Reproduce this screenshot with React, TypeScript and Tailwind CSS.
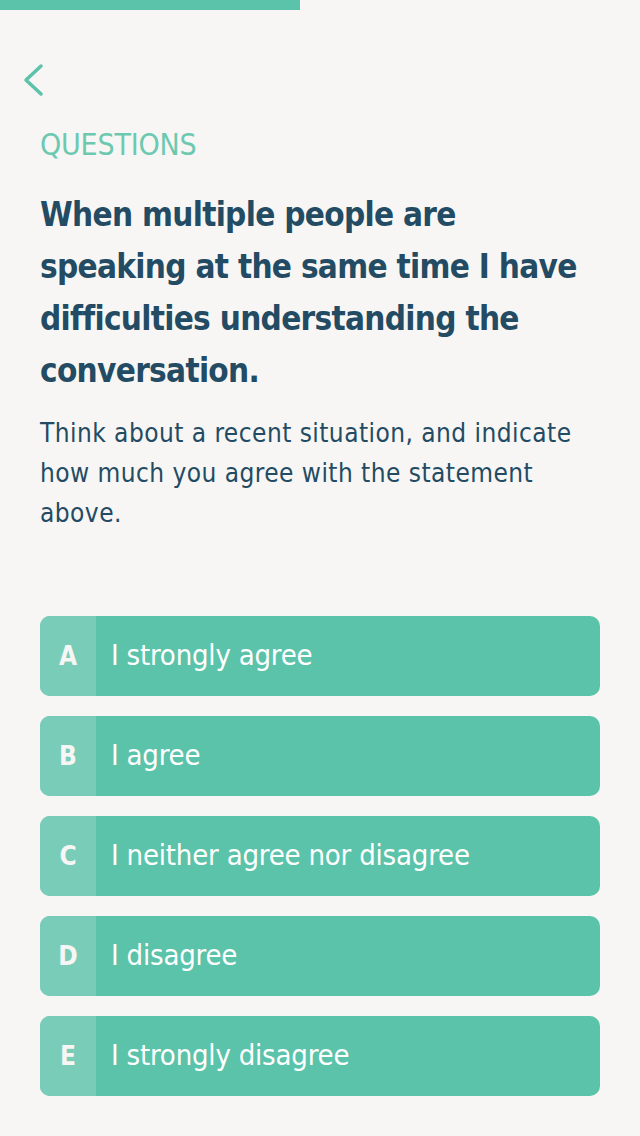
const options = [
  { key: "A", label: "I strongly agree" },
  { key: "B", label: "I agree" },
  { key: "C", label: "I neither agree nor disagree" },
  { key: "D", label: "I disagree" },
  { key: "E", label: "I strongly disagree" },
];

const font = { fontFamily: "'Liberation Sans Narrow', 'DejaVu Sans Condensed', sans-serif" };

export default function App() {
  return (
    <div className="min-h-screen w-full bg-[#f7f6f4]" style={font}>
      {/* progress */}
      <div className="h-[10px] w-[300px] bg-[#5bc3a9]" />

      <div className="pt-[50px] pl-[20px]">
        <button className="block h-10 w-7 text-[#5bc3a9]">
          <svg width="28" height="40" viewBox="0 0 28 40" fill="none">
            <path d="M21 6 L6 20 L21 34" stroke="currentColor" strokeWidth="3.5" strokeLinecap="round" strokeLinejoin="round" />
          </svg>
        </button>
      </div>

      <div className="px-10">
        <p className="mt-[27px] text-[30px] leading-9 tracking-[-0.2px] text-[#6cc9b0]">QUESTIONS</p>

        <h1 className="mt-[26px] text-[33px] font-bold leading-[52px] tracking-[-0.7px] text-[#234b63]">
          When multiple people are speaking at the same time I have difficulties understanding the conversation.
        </h1>

        <p className="mt-4 text-[26px] leading-10 tracking-[0.45px] text-[#234b63]">
          Think about a recent situation, and indicate how much you agree with the statement above.
        </p>

        <div className="mt-[83px] flex flex-col gap-5">
          {options.map((o) => (
            <div key={o.key} className="flex h-20 overflow-hidden rounded-[10px] bg-[#5bc3a9]">
              <div className="flex w-14 items-center justify-center bg-[#79cdb8] text-[26px] font-bold text-[#f7f6f4]">
                {o.key}
              </div>
              <div className="flex items-center pl-[15px] text-[29px] tracking-[-0.2px] text-white">{o.label}</div>
            </div>
          ))}
        </div>
      </div>
    </div>
  );
}
